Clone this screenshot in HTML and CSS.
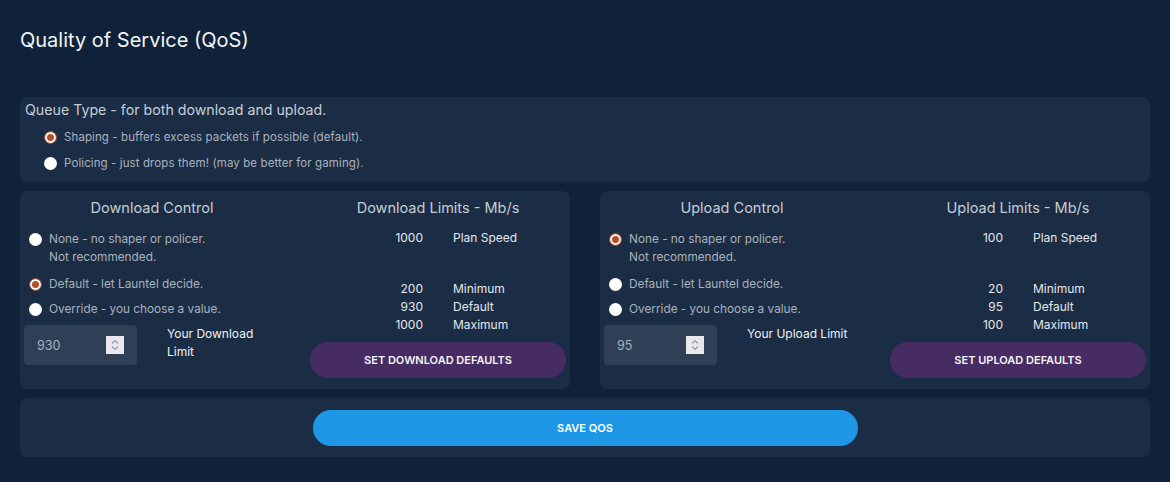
FILE: index.html
```html
<!DOCTYPE html>
<html lang="en">
<head>
<meta charset="utf-8">
<title>Quality of Service (QoS)</title>
<link rel="stylesheet" href="styles.css">
</head>
<body>
<div class="page">
  <h1 class="title">Quality of Service (QoS)</h1>

  <section class="card queue">
    <div class="queue-head">Queue Type - for both download and upload.</div>
    <label class="qopt"><span class="radio checked"></span><span>Shaping - buffers excess packets if possible (default).</span></label>
    <label class="qopt"><span class="radio"></span><span>Policing - just drops them! (may be better for gaming).</span></label>
  </section>

  <div class="pair">
    <section class="card ctl">
      <div class="col">
        <div class="col-head">Download Control</div>
        <label class="opt o1"><span class="radio"></span><span>None - no shaper or policer.<br>Not recommended.</span></label>
        <label class="opt o2"><span class="radio checked"></span><span>Default - let Launtel decide.</span></label>
        <label class="opt o3"><span class="radio"></span><span>Override - you choose a value.</span></label>
        <div class="input-row">
          <div class="num-input"><span class="val">930</span><span class="spin"><svg width="18" height="18" viewBox="0 0 18 18"><path d="M6 7.5 L9 4.5 L12 7.5" fill="none" stroke="#9b9aa8" stroke-width="1.2"/><path d="M6 10.5 L9 13.5 L12 10.5" fill="none" stroke="#9b9aa8" stroke-width="1.2"/></svg></span></div>
          <div class="your">Your Download Limit</div>
        </div>
      </div>
      <div class="col">
        <div class="col-head">Download Limits - Mb/s</div>
        <div class="limits">
          <span class="n">1000</span><span class="l">Plan Speed</span>
          <span class="gap"></span>
          <span class="n">200</span><span class="l">Minimum</span>
          <span class="n">930</span><span class="l">Default</span>
          <span class="n">1000</span><span class="l">Maximum</span>
        </div>
        <button class="btn-purple">SET DOWNLOAD DEFAULTS</button>
      </div>
    </section>

    <section class="card ctl">
      <div class="col">
        <div class="col-head">Upload Control</div>
        <label class="opt o1"><span class="radio checked"></span><span>None - no shaper or policer.<br>Not recommended.</span></label>
        <label class="opt o2"><span class="radio"></span><span>Default - let Launtel decide.</span></label>
        <label class="opt o3"><span class="radio"></span><span>Override - you choose a value.</span></label>
        <div class="input-row">
          <div class="num-input"><span class="val">95</span><span class="spin"><svg width="18" height="18" viewBox="0 0 18 18"><path d="M6 7.5 L9 4.5 L12 7.5" fill="none" stroke="#9b9aa8" stroke-width="1.2"/><path d="M6 10.5 L9 13.5 L12 10.5" fill="none" stroke="#9b9aa8" stroke-width="1.2"/></svg></span></div>
          <div class="your">Your Upload Limit</div>
        </div>
      </div>
      <div class="col">
        <div class="col-head">Upload Limits - Mb/s</div>
        <div class="limits">
          <span class="n">100</span><span class="l">Plan Speed</span>
          <span class="gap"></span>
          <span class="n">20</span><span class="l">Minimum</span>
          <span class="n">95</span><span class="l">Default</span>
          <span class="n">100</span><span class="l">Maximum</span>
        </div>
        <button class="btn-purple">SET UPLOAD DEFAULTS</button>
      </div>
    </section>
  </div>

  <section class="card save">
    <button class="btn-blue">SAVE QOS</button>
  </section>
</div>
</body>
</html>
```

FILE: styles.css
```css
* { box-sizing: border-box; }
html, body { margin: 0; padding: 0; }
body {
  background: #0f2239;
  font-family: Inter, Roboto, "Liberation Sans", sans-serif;
  color: #c4cad3;
  width: 1170px;
  height: 482px;
  overflow: hidden;
}
.page { padding: 28px 20px 0; }
.title {
  margin: 0 0 45px;
  font-size: 20px;
  line-height: 24px;
  font-weight: 400;
  color: #f2f4f7;
}
.card {
  background: #1b2d45;
  border-radius: 7px;
}
.queue { padding: 3px 5px 6px; }
.queue-head {
  font-size: 14.2px;
  line-height: 20px;
  color: #c8cdd5;
}
.qopt {
  display: flex;
  align-items: center;
  gap: 7px;
  height: 26px;
  padding-left: 19px;
  font-size: 11.5px;
  letter-spacing: 0.1px;
  color: #aab2bd;
}
.queue-head + .qopt { margin-top: 4px; }
.radio {
  flex: none;
  width: 13px;
  height: 13px;
  border-radius: 50%;
  background: #ffffff;
}
.radio.checked {
  background: #b24d2b;
  border: 1px solid #b24d2b;
  box-shadow: inset 0 0 0 2px #ffffff;
}
.pair {
  display: flex;
  gap: 30px;
  margin-top: 9px;
}
.ctl {
  width: 550px;
  height: 198px;
  padding: 7px 4px;
  display: grid;
  grid-template-columns: 256px 256px;
  column-gap: 30px;
}
.col { display: flex; flex-direction: column; }
.col-head {
  text-align: center;
  font-size: 14.5px;
  line-height: 20px;
  color: #c6ccd4;
}
.opt {
  display: flex;
  align-items: flex-start;
  gap: 7px;
  padding-left: 5px;
  font-size: 11.8px;
  line-height: 18px;
  color: #aab2bd;
}
.opt .radio { margin-top: 3px; }
.o1 { margin-top: 12px; }
.o2 { margin-top: 9px; }
.o3 { margin-top: 7px; }
.input-row {
  display: flex;
  gap: 30px;
  margin-top: 7px;
}
.num-input {
  width: 113px;
  height: 40px;
  background: #2f4056;
  border-radius: 4px;
  display: flex;
  align-items: center;
  justify-content: space-between;
  padding: 0 13px 0 13px;
  font-size: 12.5px;
  color: #a9b1bc;
}
.spin {
  width: 18px;
  height: 18px;
  background: #e9e8ee;
  display: block;
}
.spin svg { display: block; }
.your {
  width: 104px;
  font-size: 12px;
  line-height: 18px;
  color: #eef0f3;
}
.limits {
  display: grid;
  grid-template-columns: 113px 1fr;
  column-gap: 30px;
  margin-top: 11px;
  font-size: 12px;
  line-height: 18px;
  color: #e4e7eb;
}
.limits .n { text-align: right; }
.limits .gap { grid-column: 1 / 3; height: 33px; }
.btn-purple {
  margin-top: 8px;
  height: 36px;
  width: 256px;
  border: 0;
  border-radius: 18px;
  background: #472c64;
  color: #f4f2f7;
  font-family: Inter, Roboto, "Liberation Sans", sans-serif;
  font-size: 11px;
  font-weight: 600;
}
.save {
  margin-top: 9px;
  height: 59px;
  padding: 12px 0;
  display: flex;
  justify-content: center;
}
.btn-blue {
  width: 545px;
  height: 36px;
  border: 0;
  border-radius: 18px;
  background: #1e96e6;
  color: #ffffff;
  font-family: Inter, Roboto, "Liberation Sans", sans-serif;
  font-size: 11px;
  font-weight: 600;
}
```
